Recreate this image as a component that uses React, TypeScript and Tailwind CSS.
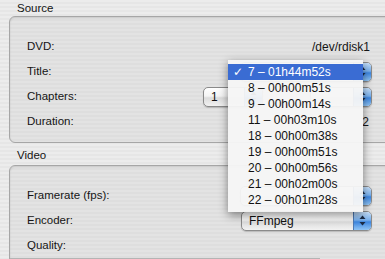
import React from "react";

const font = "font-['Liberation_Sans',Arial,sans-serif]";

const PopUp = ({ label, className }: { label?: string; className?: string }) => (
    <div
        className={`flex h-[20px] items-center overflow-hidden rounded-[5px] border border-[#8a8a8a] bg-[linear-gradient(180deg,#ffffff_0%,#f4f4f4_45%,#dcdcdc_55%,#f2f2f2_100%)] shadow-[0_1px_1px_rgba(0,0,0,0.18)] ${className ?? ""}`}
    >
        <span className="flex-1 pl-[7px] text-[12px] leading-none text-[#111]">{label}</span>
        <div className="flex h-full w-[18px] items-center justify-center border-l border-[#4d79b3] bg-[linear-gradient(180deg,#c6e0fb_0%,#79b1ee_45%,#3d86e0_55%,#8fc4f5_100%)]">
            <svg width="7" height="11" viewBox="0 0 7 11">
                <path d="M3.5 0.5 L6.5 4 L0.5 4 Z" fill="#1b2b45" />
                <path d="M3.5 10.5 L6.5 7 L0.5 7 Z" fill="#1b2b45" />
            </svg>
        </div>
    </div>
);

const Row = ({ label, children }: { label: string; children?: React.ReactNode }) => (
    <div className="flex h-[25px] items-center">
        <div className="w-[173px] shrink-0 pl-[17px] text-[11.5px] text-[#151515]">{label}</div>
        <div className="flex w-[189px] shrink-0 items-center justify-end">{children}</div>
    </div>
);

const Box = ({ className, children }: { className?: string; children: React.ReactNode }) => (
    <div
        className={`ml-[9px] w-[420px] rounded-[6px] border border-[#a6a6a6] pt-[17px] shadow-[inset_0_1px_2px_rgba(0,0,0,0.12)] bg-[repeating-linear-gradient(180deg,#e3e3e3_0px,#e3e3e3_2px,#dedede_2px,#dedede_4px)] ${className ?? ""}`}
    >
        {children}
    </div>
);

const titles = [
    "7 – 01h44m52s",
    "8 – 00h00m51s",
    "9 – 00h00m14s",
    "11 – 00h03m10s",
    "18 – 00h00m38s",
    "19 – 00h00m51s",
    "20 – 00h00m56s",
    "21 – 00h02m00s",
    "22 – 00h01m28s",
];

export default function App() {
    return (
        <div
            className={`relative h-[259px] w-[385px] overflow-hidden text-[#151515] ${font} bg-[repeating-linear-gradient(180deg,#ececec_0px,#ececec_2px,#e6e6e6_2px,#e6e6e6_4px)]`}
        >
            <div className="h-[16px] pl-[17px] text-[11.5px] leading-[16px]">Source</div>
            <Box className="h-[127px]">
                <Row label="DVD:">
                    <span className="pr-[2px] text-[12px]">/dev/rdisk1</span>
                </Row>
                <Row label="Title:">
                    {/* covered by the open menu */}
                    <PopUp className="w-[132px]" />
                </Row>
                <Row label="Chapters:">
                    <div className="flex w-full items-center justify-between pl-[20px]">
                        <PopUp label="1" className="w-[60px]" />
                        <PopUp className="w-[62px]" />
                    </div>
                </Row>
                <Row label="Duration:">
                    <span className="pr-[3px] text-[12px]">2</span>
                </Row>
            </Box>

            <div className="mt-[4px] h-[16px] pl-[17px] text-[11.5px] leading-[16px]">Video</div>
            <Box className="mt-[2px] h-[120px]">
                <Row label="Framerate (fps):">
                    <PopUp className="w-[132px]" />
                </Row>
                <Row label="Encoder:">
                    <PopUp label="FFmpeg" className="w-[131px]" />
                </Row>
                <Row label="Quality:" />
                <div className="h-px w-[310px] bg-[#b4b4b4]" />
            </Box>

            {/* open title menu */}
            <div className="absolute left-[228px] top-[60px] w-[135px] bg-[#f6f6f6]/95 py-[4px] shadow-[0_3px_9px_rgba(0,0,0,0.45)]">
                {titles.map((t, i) => (
                    <div
                        key={t}
                        className={`flex h-[16px] items-center text-[12px] leading-none ${i === 0 ? "bg-[#3a6cd3] text-white" : "text-[#111]"}`}
                    >
                        <span className="w-[20px] shrink-0 pl-[5px] font-['DejaVu_Sans',sans-serif] text-[12px] font-bold">
                            {i === 0 ? "✓" : ""}
                        </span>
                        <span>{t}</span>
                    </div>
                ))}
            </div>
        </div>
    );
}
